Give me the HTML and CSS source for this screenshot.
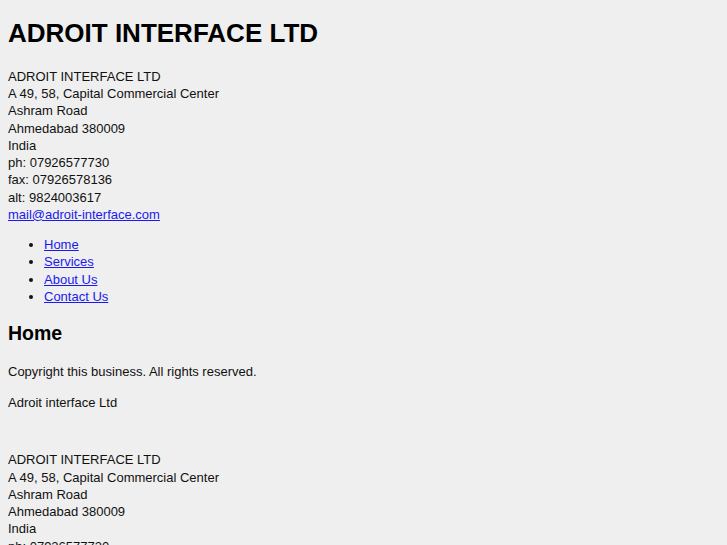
FILE: index.html
```html
<!DOCTYPE html>
<html lang="en">
<head>
    <meta charset="UTF-8">
    <title>ADROIT INTERFACE LTD</title>
    <link rel="stylesheet" href="styles.css">
</head>
<body>
    <h1>ADROIT INTERFACE LTD</h1>
    <div class="address">
        ADROIT INTERFACE LTD<br>
        A 49, 58, Capital Commercial Center<br>
        Ashram Road<br>
        Ahmedabad 380009<br>
        India<br>
        ph: 07926577730<br>
        fax: 07926578136<br>
        alt: 9824003617<br>
        <a href="mailto:mail@adroit-interface.com">mail@adroit-interface.com</a>
    </div>
    <ul class="nav">
        <li><a href="#">Home</a></li>
        <li><a href="#">Services</a></li>
        <li><a href="#">About Us</a></li>
        <li><a href="#">Contact Us</a></li>
    </ul>
    <h2>Home</h2>
    <p>Copyright this business. All rights reserved.</p>
    <p>Adroit interface Ltd</p>
    <p class="spacer">&nbsp;</p>
    <div class="address">
        ADROIT INTERFACE LTD<br>
        A 49, 58, Capital Commercial Center<br>
        Ashram Road<br>
        Ahmedabad 380009<br>
        India<br>
        ph: 07926577730<br>
        fax: 07926578136<br>
        alt: 9824003617<br>
        <a href="mailto:mail@adroit-interface.com">mail@adroit-interface.com</a>
    </div>
</body>
</html>
```

FILE: styles.css
```css
/* plain page, grey background */
body {
    font-family: "Liberation Sans", Arial, sans-serif;
    font-size: 13px;
    line-height: 1.327;
    color: #111;
    background-color: #efefef;
}
h1, h2 {
    color: #000;
}
h1 {
    margin-top: 8px;
}
a {
    color: #1a1aee;
}
.nav {
    padding-left: 36px;
}
.spacer {
    height: 14.6px;
}
```
